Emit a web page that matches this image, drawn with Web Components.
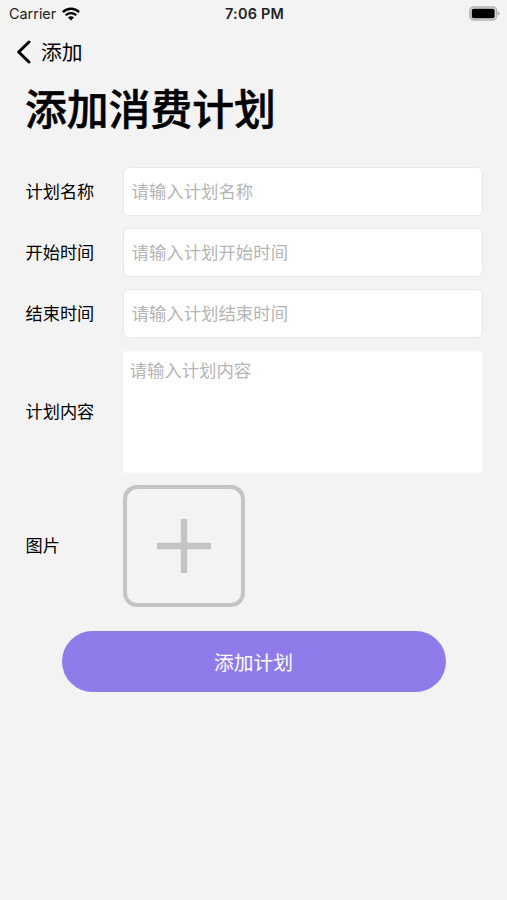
<!DOCTYPE html>
<html lang="zh-CN">
<head>
<meta charset="UTF-8">
<meta name="viewport" content="width=device-width, initial-scale=1">
<title>添加消费计划</title>
<style>
  body {
    margin: 0;
    height: 900px;
    overflow: hidden;
    background: #f3f3f3;
    color: #000;
    font-family: Inter, 'Noto Sans CJK SC', sans-serif;
  }
</style>
</head>
<body>
<plan-page></plan-page>

<script>
class StatusBar extends HTMLElement {
  constructor() {
    super();
    this.attachShadow({ mode: 'open' });
  }

  connectedCallback() {
    this.shadowRoot.innerHTML = `
      <style>
        :host {
          display: grid;
          grid-template-columns: 1fr auto 1fr;
          align-items: center;
          height: 27px;
          padding: 0 7px 0 9px;
          font-size: 14.4px;
          line-height: 27px;
          color: #222;
        }
        .carrier {
          display: flex;
          align-items: center;
          gap: 6px;
        }
        .time {
          font-size: 14.4px;
          font-weight: 600;
          letter-spacing: 0.22px;
        }
        .battery {
          justify-self: end;
        }
        svg {
          display: block;
        }
      </style>
      <div class="carrier">
        <span>Carrier</span>
        <svg width="18" height="14" viewBox="0 0 18 14" fill="none" stroke="#000" stroke-width="2.3">
          <path d="M0.9 5.1a11.5 11.5 0 0 1 16.2 0"/>
          <path d="M3.8 8.3a7.4 7.4 0 0 1 10.4 0"/>
          <path d="M9 13.6L6 10.6a4.3 4.3 0 0 1 6 0z" fill="#000" stroke="none"/>
        </svg>
      </div>
      <span class="time">7:06 PM</span>
      <svg class="battery" width="31" height="15" viewBox="0 0 31 15">
        <rect x="0.9" y="0.9" width="26.7" height="13.2" rx="4" fill="#ddd" stroke="#b3b3b3" stroke-width="1.5"/>
        <rect x="2.8" y="2.8" width="22.8" height="9.4" rx="1.8" fill="#000"/>
        <path d="M28.7 5.2q2 .8 2 2.3t-2 2.3z" fill="#b3b3b3"/>
      </svg>
    `;
  }
}

class NavBar extends HTMLElement {
  constructor() {
    super();
    this.attachShadow({ mode: 'open' });
  }

  connectedCallback() {
    this.shadowRoot.innerHTML = `
      <style>
        :host {
          display: flex;
          align-items: center;
          gap: 9px;
          height: 52px;
          padding-left: 16px;
          font-size: 20.8px;
          line-height: 52px;
        }
        svg {
          display: block;
          margin-bottom: 2px;
        }
      </style>
      <svg width="16" height="24" viewBox="0 0 16 24" fill="none" stroke="#000" stroke-width="3" stroke-linecap="round" stroke-linejoin="round">
        <path d="M13 2L2.7 12L13 22"/>
      </svg>
      <span><slot></slot></span>
    `;
  }
}

class FormRow extends HTMLElement {
  constructor() {
    super();
    this.attachShadow({ mode: 'open' });
  }

  connectedCallback() {
    this.shadowRoot.innerHTML = `
      <style>
        :host {
          display: grid;
          grid-template-columns: 97.5px 1fr;
          align-items: center;
        }
        .label {
          padding-top: 1px;
          font-size: 17.2px;
          line-height: 24px;
        }
      </style>
      <span class="label">${this.getAttribute('label')}</span>
      <slot></slot>
    `;
  }
}

class TextField extends HTMLElement {
  constructor() {
    super();
    this.attachShadow({ mode: 'open' });
  }

  connectedCallback() {
    this.shadowRoot.innerHTML = `
      <style>
        :host {
          display: flex;
          align-items: center;
          box-sizing: border-box;
          height: 49px;
          padding: 0 7.5px;
          border: 1px solid #e9e9e9;
          border-radius: 6px;
          background: #fff;
          color: #b5b5b5;
          font-size: 17.4px;
          line-height: 24px;
        }
        :host([multiline]) {
          align-items: flex-start;
          height: 122px;
          padding: 7px 5.5px;
          border-color: #fafafa;
          border-radius: 0;
        }
      </style>
      <span><slot></slot></span>
    `;
  }
}

class ImagePicker extends HTMLElement {
  constructor() {
    super();
    this.attachShadow({ mode: 'open' });
  }

  connectedCallback() {
    this.shadowRoot.innerHTML = `
      <style>
        :host {
          display: flex;
          align-items: center;
          justify-content: center;
          box-sizing: border-box;
          width: 122px;
          height: 122px;
          border: 4px solid #c4c4c4;
          border-radius: 14px;
        }
      </style>
      <svg width="54" height="54" viewBox="0 0 54 54" fill="none" stroke="#c4c4c4" stroke-width="6.4">
        <path d="M27 0V54M0 27H54"/>
      </svg>
    `;
  }
}

class SubmitButton extends HTMLElement {
  constructor() {
    super();
    this.attachShadow({ mode: 'open' });
  }

  connectedCallback() {
    this.shadowRoot.innerHTML = `
      <style>
        :host {
          display: block;
        }
        button {
          display: block;
          width: 100%;
          height: 61px;
          padding: 0 1px 0 0;
          border: 0;
          border-radius: 31px;
          background: #8e7be9;
          color: #fff;
          font: inherit;
          font-size: 19.8px;
        }
      </style>
      <button type="button"><slot></slot></button>
    `;
  }
}

class PlanPage extends HTMLElement {
  constructor() {
    super();
    this.attachShadow({ mode: 'open' });
  }

  connectedCallback() {
    this.shadowRoot.innerHTML = `
      <style>
        :host {
          display: block;
        }
        h1 {
          margin: 0;
          padding-left: 25px;
          font-size: 41.8px;
          font-weight: 500;
          line-height: 62px;
          -webkit-text-stroke: 0.5px #000;
        }
        .form {
          display: flex;
          flex-direction: column;
          gap: 12.2px;
          padding: 26px 24.5px 0 25.5px;
        }
        submit-button {
          margin: 24px 61px 0 62px;
        }
      </style>
      <status-bar></status-bar>
      <nav-bar>添加</nav-bar>
      <h1>添加消费计划</h1>
      <div class="form">
        <form-row label="计划名称"><text-field>请输入计划名称</text-field></form-row>
        <form-row label="开始时间"><text-field>请输入计划开始时间</text-field></form-row>
        <form-row label="结束时间"><text-field>请输入计划结束时间</text-field></form-row>
        <form-row label="计划内容"><text-field multiline>请输入计划内容</text-field></form-row>
        <form-row label="图片"><image-picker></image-picker></form-row>
      </div>
      <submit-button>添加计划</submit-button>
    `;
  }
}

customElements.define('status-bar', StatusBar);
customElements.define('nav-bar', NavBar);
customElements.define('form-row', FormRow);
customElements.define('text-field', TextField);
customElements.define('image-picker', ImagePicker);
customElements.define('submit-button', SubmitButton);
customElements.define('plan-page', PlanPage);
</script>
</body>
</html>
